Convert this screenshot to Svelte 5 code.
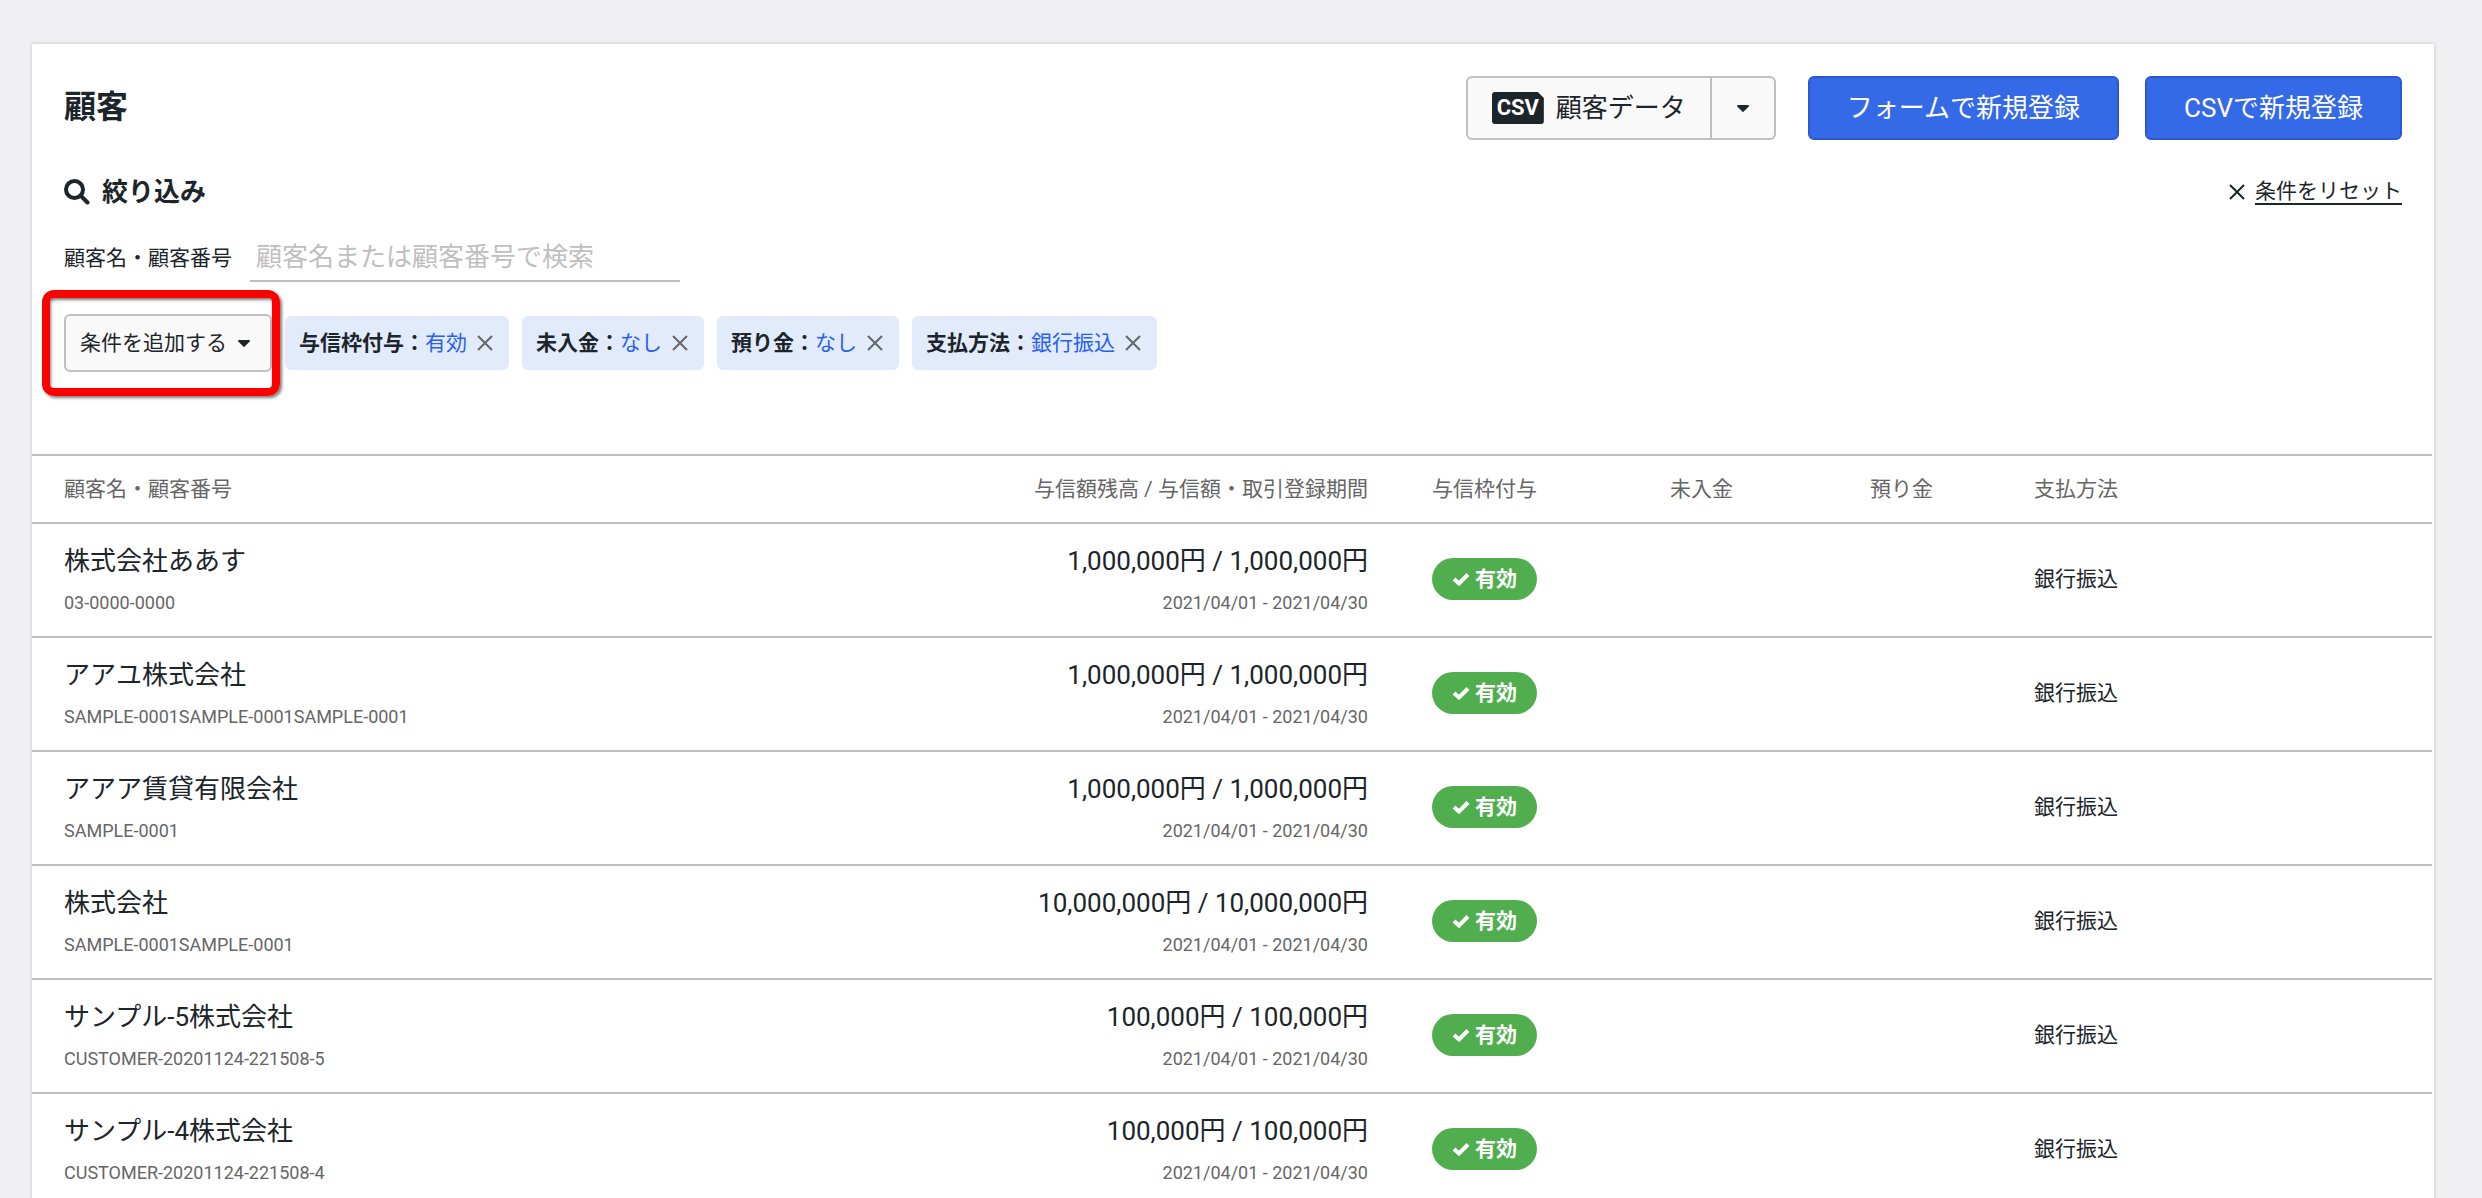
<!--
  Customer list: title bar with the registration actions, the filter
  row with its condition chips, and the table of customers below.
-->
<script lang="ts">
  interface Customer {
    name: string;
    code: string;
    credit: string;
    balance: string;
    period: string;
    method: string;
  }

  const period = '2021/04/01 - 2021/04/30';
  const method = '銀行振込';

  const customers: Customer[] = [
    { name: '株式会社ああす', code: '03-0000-0000', balance: '1,000,000', credit: '1,000,000', period, method },
    { name: 'アアユ株式会社', code: 'SAMPLE-0001SAMPLE-0001SAMPLE-0001', balance: '1,000,000', credit: '1,000,000', period, method },
    { name: 'アアア賃貸有限会社', code: 'SAMPLE-0001', balance: '1,000,000', credit: '1,000,000', period, method },
    { name: '株式会社', code: 'SAMPLE-0001SAMPLE-0001', balance: '10,000,000', credit: '10,000,000', period, method },
    { name: 'サンプル-5株式会社', code: 'CUSTOMER-20201124-221508-5', balance: '100,000', credit: '100,000', period, method },
    { name: 'サンプル-4株式会社', code: 'CUSTOMER-20201124-221508-4', balance: '100,000', credit: '100,000', period, method }
  ];

  let keyword = $state('');
  let conditions = $state([
    { label: '与信枠付与', value: '有効' },
    { label: '未入金', value: 'なし' },
    { label: '預り金', value: 'なし' },
    { label: '支払方法', value: '銀行振込' }
  ]);

  function remove(label: string) {
    conditions = conditions.filter((c) => c.label !== label);
  }

  function reset() {
    keyword = '';
    conditions = [];
  }
</script>

{#snippet caret()}
  <svg class="caret" viewBox="0 0 14 8" aria-hidden="true"><path d="M1 0h12a1 1 0 0 1 .7 1.6L7.8 7.6a1 1 0 0 1-1.6 0L.3 1.6A1 1 0 0 1 1 0z" /></svg>
{/snippet}

{#snippet cross()}
  <svg class="cross" viewBox="0 0 16 16" aria-hidden="true"><path d="M1 1l14 14M15 1L1 15" /></svg>
{/snippet}

<div class="page">
  <main class="card">
    <header class="head">
      <h1>顧客</h1>
      <div class="actions">
        <div class="split">
          <button class="split__main" type="button"><span class="csv">CSV</span>顧客データ</button>
          <button class="split__more" type="button" aria-label="メニューを開く">{@render caret()}</button>
        </div>
        <div class="create">
          <button class="primary" type="button">フォームで新規登録</button>
          <button class="primary" type="button">CSVで新規登録</button>
        </div>
      </div>
    </header>

    <section class="filter">
      <div class="filter__head">
        <h2>
          <svg class="search" viewBox="0 0 26 26" aria-hidden="true">
            <circle cx="10.5" cy="10.5" r="8.5" />
            <path d="M17 17l6.5 6.5" />
          </svg>
          絞り込み
        </h2>
        <button class="reset" type="button" onclick={reset}>{@render cross()}<span>条件をリセット</span></button>
      </div>

      <div class="keyword">
        <label for="keyword">顧客名・顧客番号</label>
        <input id="keyword" type="text" placeholder="顧客名または顧客番号で検索" bind:value={keyword} />
      </div>

      <div class="conditions">
        <div class="add">
          <button class="add__button" type="button">条件を追加する{@render caret()}</button>
        </div>
        {#each conditions as c (c.label)}
          <div class="chip">
            <b>{c.label}：</b><span class="chip__value">{c.value}</span>
            <button type="button" aria-label="{c.label}を削除" onclick={() => remove(c.label)}>{@render cross()}</button>
          </div>
        {/each}
      </div>
    </section>

    <table>
      <colgroup>
        <col />
        <col class="c-amount" />
        <col class="c-status" />
        <col class="c-unpaid" />
        <col class="c-deposit" />
        <col class="c-method" />
      </colgroup>
      <thead>
        <tr>
          <th>顧客名・顧客番号</th>
          <th class="right">与信額残高 / 与信額・取引登録期間</th>
          <th>与信枠付与</th>
          <th>未入金</th>
          <th>預り金</th>
          <th>支払方法</th>
        </tr>
      </thead>
      <tbody>
        {#each customers as c (c.name)}
          <tr>
            <td>
              <div class="main">{c.name}</div>
              <div class="sub">{c.code}</div>
            </td>
            <td class="right">
              <div class="main">{c.balance}円 / {c.credit}円</div>
              <div class="sub">{c.period}</div>
            </td>
            <td>
              <span class="badge">
                <svg viewBox="0 0 18 14" aria-hidden="true"><path d="M2 7l5 4.5L16 2.5" /></svg>有効
              </span>
            </td>
            <td></td>
            <td></td>
            <td>{c.method}</td>
          </tr>
        {/each}
      </tbody>
    </table>
  </main>
</div>

<style>
  :global(body) {
    background: #f0f0f3;
  }
  .page {
    box-sizing: border-box;
    height: 100vh;
    padding: 44px 48px 0 32px;
    overflow: hidden;
    color: #1c252a;
    font-family: Roboto, 'Noto Sans CJK JP', sans-serif;
    font-size: 21px;
    line-height: 32px;
  }
  .card {
    min-height: 100%;
    background: #fff;
    box-shadow: 0 0 4px rgba(0, 0, 0, 0.2);
  }
  button {
    display: flex;
    align-items: center;
    justify-content: center;
    box-sizing: border-box;
    padding: 0;
    border: 0;
    background: none;
    color: inherit;
    font: inherit;
    white-space: nowrap;
    cursor: pointer;
  }
  h1,
  h2 {
    margin: 0;
  }
  h1 {
    font-size: 32px;
    line-height: 62px;
  }

  .head {
    display: flex;
    justify-content: space-between;
    padding: 32px 32px 0;
  }
  .actions {
    display: flex;
    gap: 32px;
    font-size: 26px;
  }
  .actions button {
    height: 64px;
  }
  .create {
    display: flex;
    gap: 26px;
  }
  .primary {
    padding: 0 37px;
    border: 2px solid #2d55d8;
    border-radius: 6px;
    background: #3469e8;
    color: #fff;
  }
  .split {
    display: flex;
  }
  .split button {
    border: 2px solid #bfbfbf;
    background: #f9f9f9;
  }
  .split__main {
    gap: 12px;
    padding: 0 24px;
    border-radius: 6px 0 0 6px;
  }
  .split .split__more {
    width: 64px;
    border-left: 0;
    border-radius: 0 6px 6px 0;
  }
  .csv {
    width: 52px;
    border-radius: 3px;
    background: #1c252a;
    clip-path: polygon(0 0, 46px 0, 100% 6px, 100% 100%, 0 100%);
    color: #fff;
    font-size: 22px;
    font-weight: 700;
  }
  .caret {
    width: 12px;
    height: 7px;
    fill: currentColor;
  }
  .cross {
    width: 16px;
    height: 16px;
    fill: none;
    stroke: currentColor;
    stroke-width: 2;
  }

  .filter {
    padding: 36px 32px 82px;
  }
  .filter__head {
    display: flex;
    align-items: center;
    justify-content: space-between;
  }
  h2 {
    display: flex;
    align-items: center;
    gap: 12px;
    font-size: 26px;
    font-weight: 700;
  }
  .search {
    width: 26px;
    height: 26px;
    fill: none;
    stroke: currentColor;
    stroke-width: 4;
    stroke-linecap: round;
  }
  .reset {
    gap: 10px;
  }
  .reset span {
    border-bottom: 2px solid currentColor;
    line-height: 24px;
  }
  .keyword {
    display: flex;
    align-items: center;
    gap: 18px;
    margin-top: 26px;
  }
  input {
    box-sizing: border-box;
    width: 430px;
    height: 48px;
    padding: 0 6px;
    border: 0;
    border-bottom: 2px solid #bfbfbf;
    color: inherit;
    font: inherit;
    font-size: 26px;
  }
  input::placeholder {
    color: #bfbfbf;
    opacity: 1;
  }
  .conditions {
    display: flex;
    align-items: center;
    gap: 13px;
    margin-top: 32px;
  }
  .add {
    position: relative;
  }
  /* callout frame drawn round the add button */
  .add::after {
    position: absolute;
    inset: -24px -8px -24px -22px;
    border: 8px solid #f00;
    border-radius: 12px;
    box-shadow:
      2px 2px 3px rgba(0, 0, 0, 0.5),
      inset 1px 2px 3px rgba(0, 0, 0, 0.5);
    content: '';
    pointer-events: none;
  }
  .add__button {
    gap: 11px;
    height: 58px;
    padding: 0 20px 0 14px;
    border: 2px solid #bfbfbf;
    border-radius: 6px;
    background: #f9f9f9;
  }
  .chip {
    display: flex;
    align-items: center;
    height: 54px;
    padding: 0 16px 0 14px;
    border-radius: 6px;
    background: #e2ebfc;
  }
  .chip b {
    font-weight: 700;
  }
  .chip__value {
    margin-right: 10px;
    color: #285ff5;
  }
  .chip button {
    color: #666;
  }

  table {
    width: calc(100% - 2px);
    border-collapse: collapse;
    table-layout: fixed;
  }
  .c-amount {
    width: 400px;
  }
  .c-status {
    width: 238px;
  }
  .c-unpaid {
    width: 200px;
  }
  .c-deposit {
    width: 164px;
  }
  .c-method {
    width: 430px;
  }
  tr {
    border-bottom: 2px solid #bfbfbf;
  }
  thead tr {
    border-top: 2px solid #bfbfbf;
  }
  th,
  td {
    padding: 0 32px;
    text-align: left;
    white-space: nowrap;
  }
  th {
    height: 66px;
    color: #666;
    font-weight: 400;
  }
  td {
    height: 110px;
    padding-bottom: 2px;
  }
  .right {
    text-align: right;
  }
  .main {
    font-size: 26px;
    line-height: 38px;
  }
  .sub {
    margin-top: 10px;
    color: #666;
    font-size: 18px;
    line-height: 26px;
  }
  .badge {
    display: inline-flex;
    align-items: center;
    gap: 5px;
    height: 42px;
    padding: 0 20px;
    border-radius: 21px;
    background: #50ae4f;
    color: #fff;
    font-weight: 700;
    vertical-align: middle;
  }
  .badge svg {
    width: 18px;
    height: 14px;
    fill: none;
    stroke: currentColor;
    stroke-width: 4;
  }
</style>
